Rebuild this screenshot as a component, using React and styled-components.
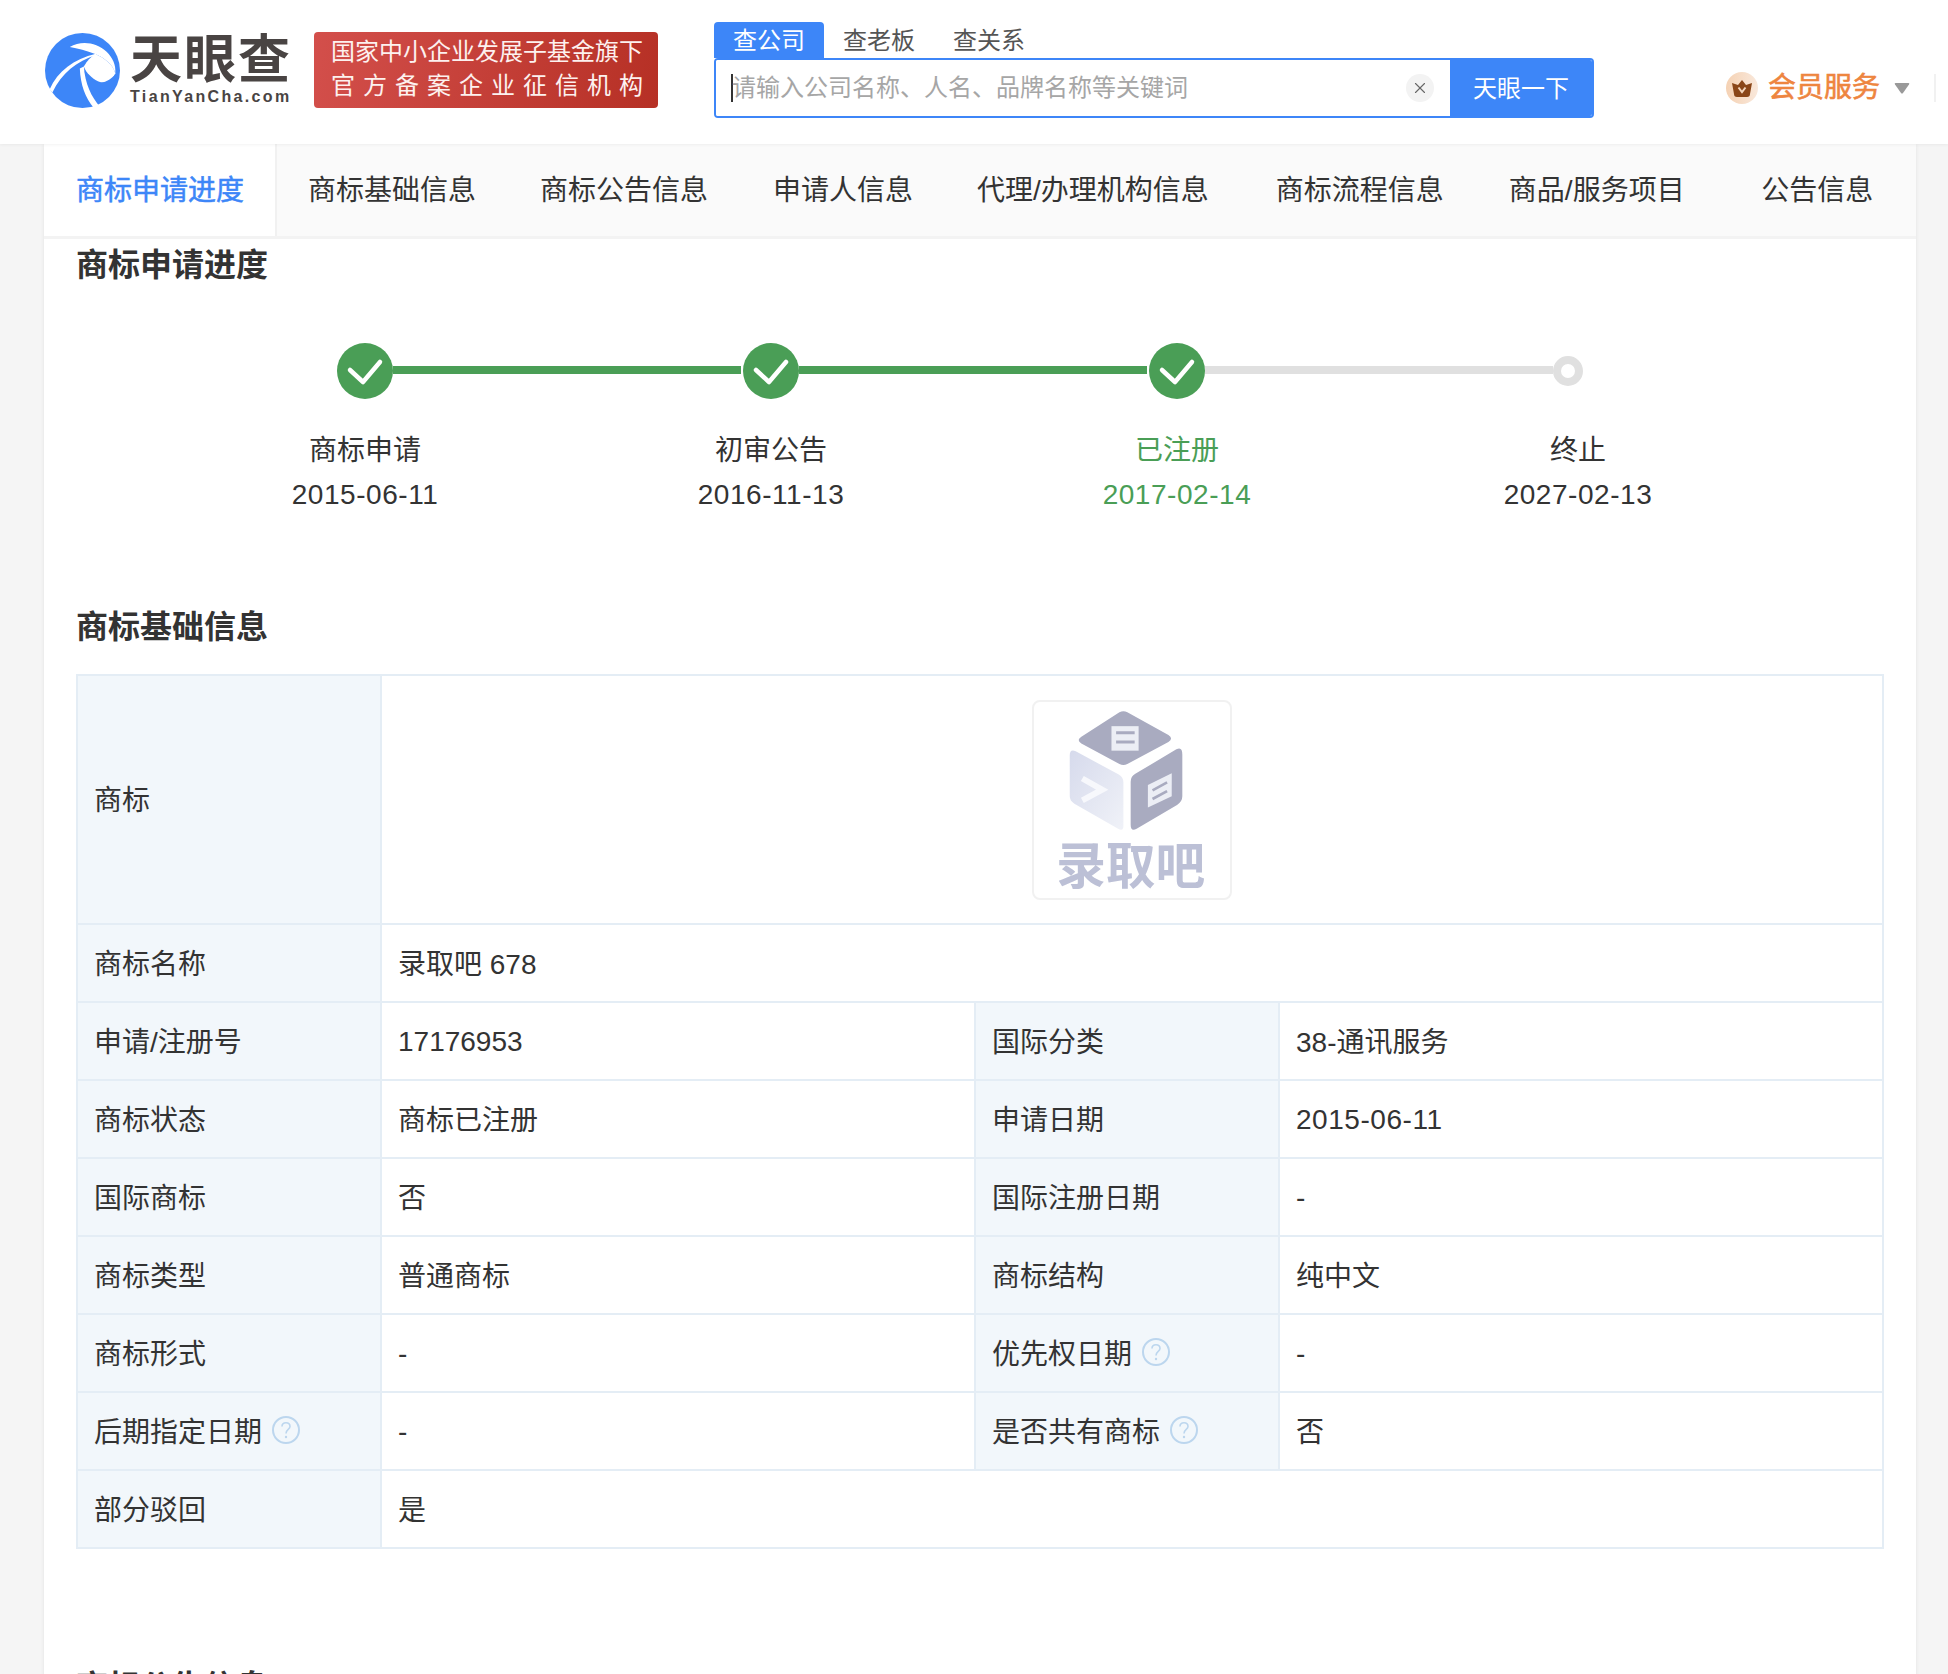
import React from "react"
import styled, { createGlobalStyle } from "styled-components"
import { X } from "lucide-react"

const GlobalStyle = createGlobalStyle`
  body {
    margin: 0;
    background-color: #f5f5f5;
    color: #333;
    font-family: "Liberation Sans", "Noto Sans CJK SC", sans-serif;
  }
`
const blue = "#3d86f8"
const green = "#4a9e56"

const Page = styled.div`
  width: 1948px;
  height: 1674px;
  overflow: hidden;
`
// Header
const HeaderBar = styled.header`
  display: flex;
  align-items: center;
  height: 144px;
  padding: 0 0 4px 45px;
  box-sizing: border-box;
  background-color: #fff;
  box-shadow: 0 1px 3px rgba(0, 0, 0, 0.05);
  position: relative;
`
const Logo = styled.div`
  display: flex;
  align-items: center;
  gap: 10px;
  width: 245px;
`
const LogoWords = styled.div`
  width: 160px;
  margin-top: -2px;
  white-space: nowrap;
`
const LogoTitle = styled.div`
  font-size: 52px;
  line-height: 52px;
  font-weight: 700;
  letter-spacing: 2px;
  color: #494443;
`
const LogoDomain = styled.div`
  margin-top: 3px;
  font-size: 16px;
  line-height: 16px;
  font-weight: 700;
  letter-spacing: 2.35px;
  color: #494443;
`
const Badge = styled.div`
  margin-left: 24px;
  width: 344px;
  height: 76px;
  padding: 3px 0 0 17px;
  box-sizing: border-box;
  border-radius: 4px;
  background: linear-gradient(100deg, #d34f4b, #b63025);
  color: #fdf1ef;
  font-size: 24px;
  line-height: 34px;
  white-space: nowrap;
`
const BadgeLine = styled.div`
  letter-spacing: ${(p) => p.$spacing || 0}px;
`
const SearchArea = styled.div`
  margin-left: 56px;
  width: 880px;
`
const SearchTabs = styled.div`
  display: flex;
`
const SearchTab = styled.div`
  width: 110px;
  height: 36px;
  line-height: 38px;
  text-align: center;
  font-size: 24px;
  border-radius: 4px 4px 0 0;
  color: ${(p) => (p.$active ? "#fff" : "#555")};
  background-color: ${(p) => (p.$active ? blue : "transparent")};
`
const SearchBox = styled.div`
  display: flex;
  height: 60px;
  box-sizing: border-box;
  border: 2px solid ${blue};
  border-radius: 4px;
  overflow: hidden;
`
const SearchField = styled.div`
  flex: 1;
  display: flex;
  align-items: center;
  justify-content: space-between;
  padding: 0 16px 0 15px;
  background-color: #fff;
`
const Placeholder = styled.span`
  font-size: 24px;
  line-height: 28px;
  color: #a6a6a6;
  white-space: nowrap;
  &::before {
    content: "";
    display: inline-block;
    width: 2px;
    height: 28px;
    margin-right: -1px;
    vertical-align: top;
    background-color: #333;
  }
`
const ClearButton = styled.span`
  display: flex;
  align-items: center;
  justify-content: center;
  width: 28px;
  height: 28px;
  border-radius: 50%;
  background-color: #f3f3f3;
  color: #666;
`
const SearchButton = styled.div`
  width: 142px;
  padding-bottom: 3px;
  box-sizing: border-box;
  display: flex;
  align-items: center;
  justify-content: center;
  background-color: ${blue};
  color: #fff;
  font-size: 24px;
`
const Member = styled.div`
  align-self: flex-end;
  margin: 0 0 36px 132px;
  display: flex;
  align-items: center;
`
const CrownDisc = styled.span`
  display: flex;
  align-items: center;
  justify-content: center;
  width: 32px;
  height: 32px;
  border-radius: 50%;
  background: linear-gradient(90deg, #f5d2b4, #f9e8db);
`
const MemberText = styled.span`
  margin-left: 10px;
  font-size: 28px;
  line-height: 32px;
  color: #ee853f;
  -webkit-text-stroke: 0.6px #ee853f;
  white-space: nowrap;
`
const Caret = styled.svg`
  margin-left: 14px;
  display: block;
`
const HeaderDivider = styled.span`
  margin-left: 24px;
  width: 2px;
  height: 28px;
  background-color: #f1f1f1;
`
// Main column
const Main = styled.main`
  margin-left: 44px;
  width: 1872px;
  background-color: #fff;
  box-shadow: 0 0 4px rgba(0, 0, 0, 0.08);
`
const TabBar = styled.nav`
  display: flex;
  height: 95px;
  box-sizing: border-box;
  background-color: #fafafa;
  border-bottom: 3px solid #f3f3f3;
`
const Tab = styled.div`
  padding: 0 ${(p) => 32 + (p.$extra || 0)}px 0 32px;
  font-size: 28px;
  line-height: 94px;
  white-space: nowrap;
  color: #333;
  &:last-child {
    flex: 1;
    text-align: center;
  }
  ${(p) =>
    p.$active &&
    `
    padding-right: 31px;
    margin-right: -1px;
    color: ${blue};
    -webkit-text-stroke: 0.5px ${blue};
    background-color: #fff;
    border-right: 2px solid #f1f1f1;
  `}
`
const Content = styled.div`
  padding-left: 32px;
`
const SectionTitle = styled.h2`
  margin: ${(p) => p.$top || 0}px 0 0;
  font-size: 32px;
  line-height: 52px;
  font-weight: 700;
  color: #333;
`
// Progress
const Track = styled.div`
  display: flex;
  align-items: center;
  margin: 52px 0 0 261px;
  height: 56px;
`
const StepCircle = styled.span`
  display: flex;
  align-items: center;
  justify-content: center;
  width: 56px;
  height: 56px;
  border-radius: 50%;
  background-color: ${green};
  flex-shrink: 0;
`
const StepLine = styled.span`
  width: 348px;
  height: 8px;
  margin: 0 ${(p) => (p.$done ? 2 : 0)}px 2px 0;
  background-color: ${(p) => (p.$done ? green : "#e0e0e0")};
`
const StepRing = styled.span`
  width: 30px;
  height: 30px;
  box-sizing: border-box;
  border: 8px solid #e0e0e0;
  border-radius: 50%;
`
const StepLabels = styled.div`
  display: grid;
  grid-template-columns: 406px 406px 406px 396px;
  margin: 30px 0 0 86px;
`
const StepLabel = styled.div`
  text-align: center;
  font-size: 28px;
  line-height: 44px;
  color: ${(p) => (p.$current ? green : "#333")};
`
const DateText = styled.span`
  letter-spacing: 0.55px;
`
// Table
const InfoTable = styled.div`
  display: grid;
  grid-template-columns: 304px 594px 304px 1fr;
  grid-template-rows: 249px repeat(8, 78px);
  width: 1808px;
  margin-top: 21px;
  box-sizing: border-box;
  border-top: 2px solid #e4edf5;
  border-left: 2px solid #e4edf5;
`
const Cell = styled.div`
  display: flex;
  align-items: center;
  padding: ${(p) => (p.$latin ? "2px 0 0 16px" : "0 0 3px 16px")};
  box-sizing: border-box;
  border-right: 2px solid #e4edf5;
  border-bottom: 2px solid #e4edf5;
  font-size: 28px;
  color: #333;
  white-space: nowrap;
  grid-column: ${(p) => (p.$wide ? "span 3" : "auto")};
`
const LabelCell = styled(Cell)`
  background-color: #f2f7fb;
`
const PictureCell = styled(Cell)`
  justify-content: center;
  padding: 0;
`
const MarkImage = styled.div`
  width: 200px;
  height: 200px;
  box-sizing: border-box;
  border: 2px solid #f1f1f1;
  border-radius: 8px;
  overflow: hidden;
`
const MarkSvg = styled.svg`
  display: block;
  filter: blur(0.7px);
`
const HelpIcon = styled.svg`
  margin-left: 10px;
  display: block;
`

const LogoMark = () => (
  <svg width="75" height="75" viewBox="14 22 224 224" style={{ flexShrink: 0 }}>
    <circle cx="126" cy="134" r="112" fill={blue} />
    <path d="M88 64C122 44 168 50 198 78C216 96 226 116 224 142C216 116 194 98 164 85C138 75 112 68 88 64Z" fill="#fff" />
    <path d="M164 85C194 98 216 116 224 142C214 166 194 176 172 166C152 156 138 142 130 122C140 106 150 94 164 85Z" fill="#fff" />
    <path d="M28 190C52 136 100 100 166 84L168 88C108 106 64 142 36 200Z" fill="#fff" />
    <path d="M118 128C120 176 134 216 160 246L178 242C152 212 134 174 130 122Z" fill="#fff" />
    <path d="M132 134C146 172 184 188 224 146C218 196 186 208 166 194C146 180 136 158 132 134Z" fill={blue} />
  </svg>
)

const CrownIcon = () => (
  <svg width="20" height="17" viewBox="0 0 20 17">
    <path d="M10 0L14 5L20 3L18 14Q18 17 15 17H5Q2 17 2 14L0 3L6 5Z" fill="#8a4618" />
    <path d="M6.5 7.5L10 12L13.5 7.5" fill="none" stroke="#f3d5bb" strokeWidth="2" />
  </svg>
)

const CheckIcon = () => (
  <svg width="56" height="56" viewBox="0 0 56 56">
    <path d="M13 27L26 39L43 19" fill="none" stroke="#fff" strokeWidth="4.5" strokeLinecap="round" strokeLinejoin="round" />
  </svg>
)

const Help = () => (
  <HelpIcon width="28" height="28" viewBox="0 0 28 28">
    <circle cx="14" cy="14" r="13" fill="none" stroke="#bcd6ee" strokeWidth="2" />
    <path d="M10 10.5C10 5.5 18 5.5 18 10.5C18 13.5 14 13.5 14 17.5" fill="none" stroke="#bcd6ee" strokeWidth="1.6" />
    <circle cx="14" cy="21" r="1.2" fill="#bcd6ee" />
  </HelpIcon>
)

const MarkPicture = () => (
  <MarkSvg width="196" height="196" viewBox="100 65 592 592">
    <defs>
      <linearGradient id="leftFace" x1="0" y1="0" x2="1" y2="1">
        <stop offset="0" stopColor="#d6daec" />
        <stop offset="1" stopColor="#f0f2f8" />
      </linearGradient>
    </defs>
    <path d="M358 96Q370 90 382 96L506 165Q522 175 506 186L382 252Q370 258 358 252L243 190Q227 180 243 170Z" fill="#a9abc0" />
    <path d="M334 138H416V212H334Z" fill="#eceef5" />
    <path d="M348 158H404M348 186H404" stroke="#a9abc0" strokeWidth="9" />
    <path d="M208 226Q208 206 226 214L356 284Q370 292 370 308V440Q370 456 354 448L222 372Q208 364 208 350Z" fill="url(#leftFace)" />
    <path d="M246 296L306 330L246 362" fill="none" stroke="#f7f8fc" strokeWidth="18" />
    <path d="M548 224Q548 198 530 208L406 282Q392 290 392 306V436Q392 458 410 448L532 376Q548 366 548 350Z" fill="#a9abc0" />
    <path d="M444 316L516 280V350L444 384Z" fill="#eceef5" />
    <path d="M458 332L502 308M458 358L502 334" stroke="#a9abc0" strokeWidth="8" />
    <text x="392" y="616" textAnchor="middle" fontFamily="'Noto Sans CJK SC'" fontWeight="700" fontSize="150" fill="#bcc0d6">录取吧</text>
  </MarkSvg>
)

const steps = [
  { name: "商标申请", date: "2015-06-11" },
  { name: "初审公告", date: "2016-11-13" },
  { name: "已注册", date: "2017-02-14", current: true },
  { name: "终止", date: "2027-02-13" },
]

const tabs = [
  { text: "商标申请进度" },
  { text: "商标基础信息" },
  { text: "商标公告信息", extra: 1 },
  { text: "申请人信息" },
  { text: "代理/办理机构信息", extra: 3 },
  { text: "商标流程信息", extra: 1 },
  { text: "商品/服务项目", extra: 2 },
  { text: "公告信息" },
]

const rows = [
  [["商标名称"], ["录取吧 678"]],
  [["申请/注册号"], ["17176953"], ["国际分类"], ["38-通讯服务"]],
  [["商标状态"], ["商标已注册"], ["申请日期"], ["2015-06-11"]],
  [["国际商标"], ["否"], ["国际注册日期"], ["-"]],
  [["商标类型"], ["普通商标"], ["商标结构"], ["纯中文"]],
  [["商标形式"], ["-"], ["优先权日期", true], ["-"]],
  [["后期指定日期", true], ["-"], ["是否共有商标", true], ["否"]],
  [["部分驳回"], ["是"]],
]

const isLatin = (text) => /^[\d-]+$/.test(text)
const isDate = (text) => /^\d{4}-\d{2}-\d{2}$/.test(text)

export default function App() {
  return (
    <Page>
      <GlobalStyle />
      <HeaderBar>
        {/* Logo */}
        <Logo>
          <LogoMark />
          <LogoWords>
            <LogoTitle>天眼查</LogoTitle>
            <LogoDomain>TianYanCha.com</LogoDomain>
          </LogoWords>
        </Logo>
        <Badge>
          <BadgeLine>国家中小企业发展子基金旗下</BadgeLine>
          <BadgeLine $spacing={8}>官方备案企业征信机构</BadgeLine>
        </Badge>
        {/* Search */}
        <SearchArea>
          <SearchTabs>
            <SearchTab $active>查公司</SearchTab>
            <SearchTab>查老板</SearchTab>
            <SearchTab>查关系</SearchTab>
          </SearchTabs>
          <SearchBox>
            <SearchField>
              <Placeholder>请输入公司名称、人名、品牌名称等关键词</Placeholder>
              <ClearButton>
                <X size={18} strokeWidth={1.5} />
              </ClearButton>
            </SearchField>
            <SearchButton>天眼一下</SearchButton>
          </SearchBox>
        </SearchArea>
        <Member>
          <CrownDisc>
            <CrownIcon />
          </CrownDisc>
          <MemberText>会员服务</MemberText>
          <Caret width="16" height="11" viewBox="0 0 16 11">
            <path d="M1.5 0H14.5Q16 0 15 1.5L9 10Q8 11 7 10L1 1.5Q0 0 1.5 0Z" fill="#999" />
          </Caret>
          <HeaderDivider />
        </Member>
      </HeaderBar>
      <Main>
        <TabBar>
          {tabs.map((t, i) => (
            <Tab key={t.text} $active={i === 0} $extra={t.extra}>
              {t.text}
            </Tab>
          ))}
        </TabBar>
        <Content>
          <SectionTitle>商标申请进度</SectionTitle>
          <Track>
            <StepCircle>
              <CheckIcon />
            </StepCircle>
            <StepLine $done />
            <StepCircle>
              <CheckIcon />
            </StepCircle>
            <StepLine $done />
            <StepCircle>
              <CheckIcon />
            </StepCircle>
            <StepLine />
            <StepRing />
          </Track>
          <StepLabels>
            {steps.map((s) => (
              <StepLabel key={s.name} $current={s.current}>
                <div>{s.name}</div>
                <DateText>{s.date}</DateText>
              </StepLabel>
            ))}
          </StepLabels>

          <SectionTitle $top={84}>商标基础信息</SectionTitle>
          <InfoTable>
            <LabelCell>商标</LabelCell>
            <PictureCell $wide>
              <MarkImage>
                <MarkPicture />
              </MarkImage>
            </PictureCell>
            {rows.map((row) =>
              row.map(([text, help], i) =>
                i % 2 === 0 ? (
                  <LabelCell key={text}>
                    {text}
                    {help && <Help />}
                  </LabelCell>
                ) : (
                  <Cell key={row[0][0] + i} $wide={row.length === 2} $latin={isLatin(text)}>
                    {isDate(text) ? <DateText>{text}</DateText> : text}
                  </Cell>
                )
              )
            )}
          </InfoTable>

          <SectionTitle $top={112}>商标公告信息</SectionTitle>
        </Content>
      </Main>
    </Page>
  )
}
